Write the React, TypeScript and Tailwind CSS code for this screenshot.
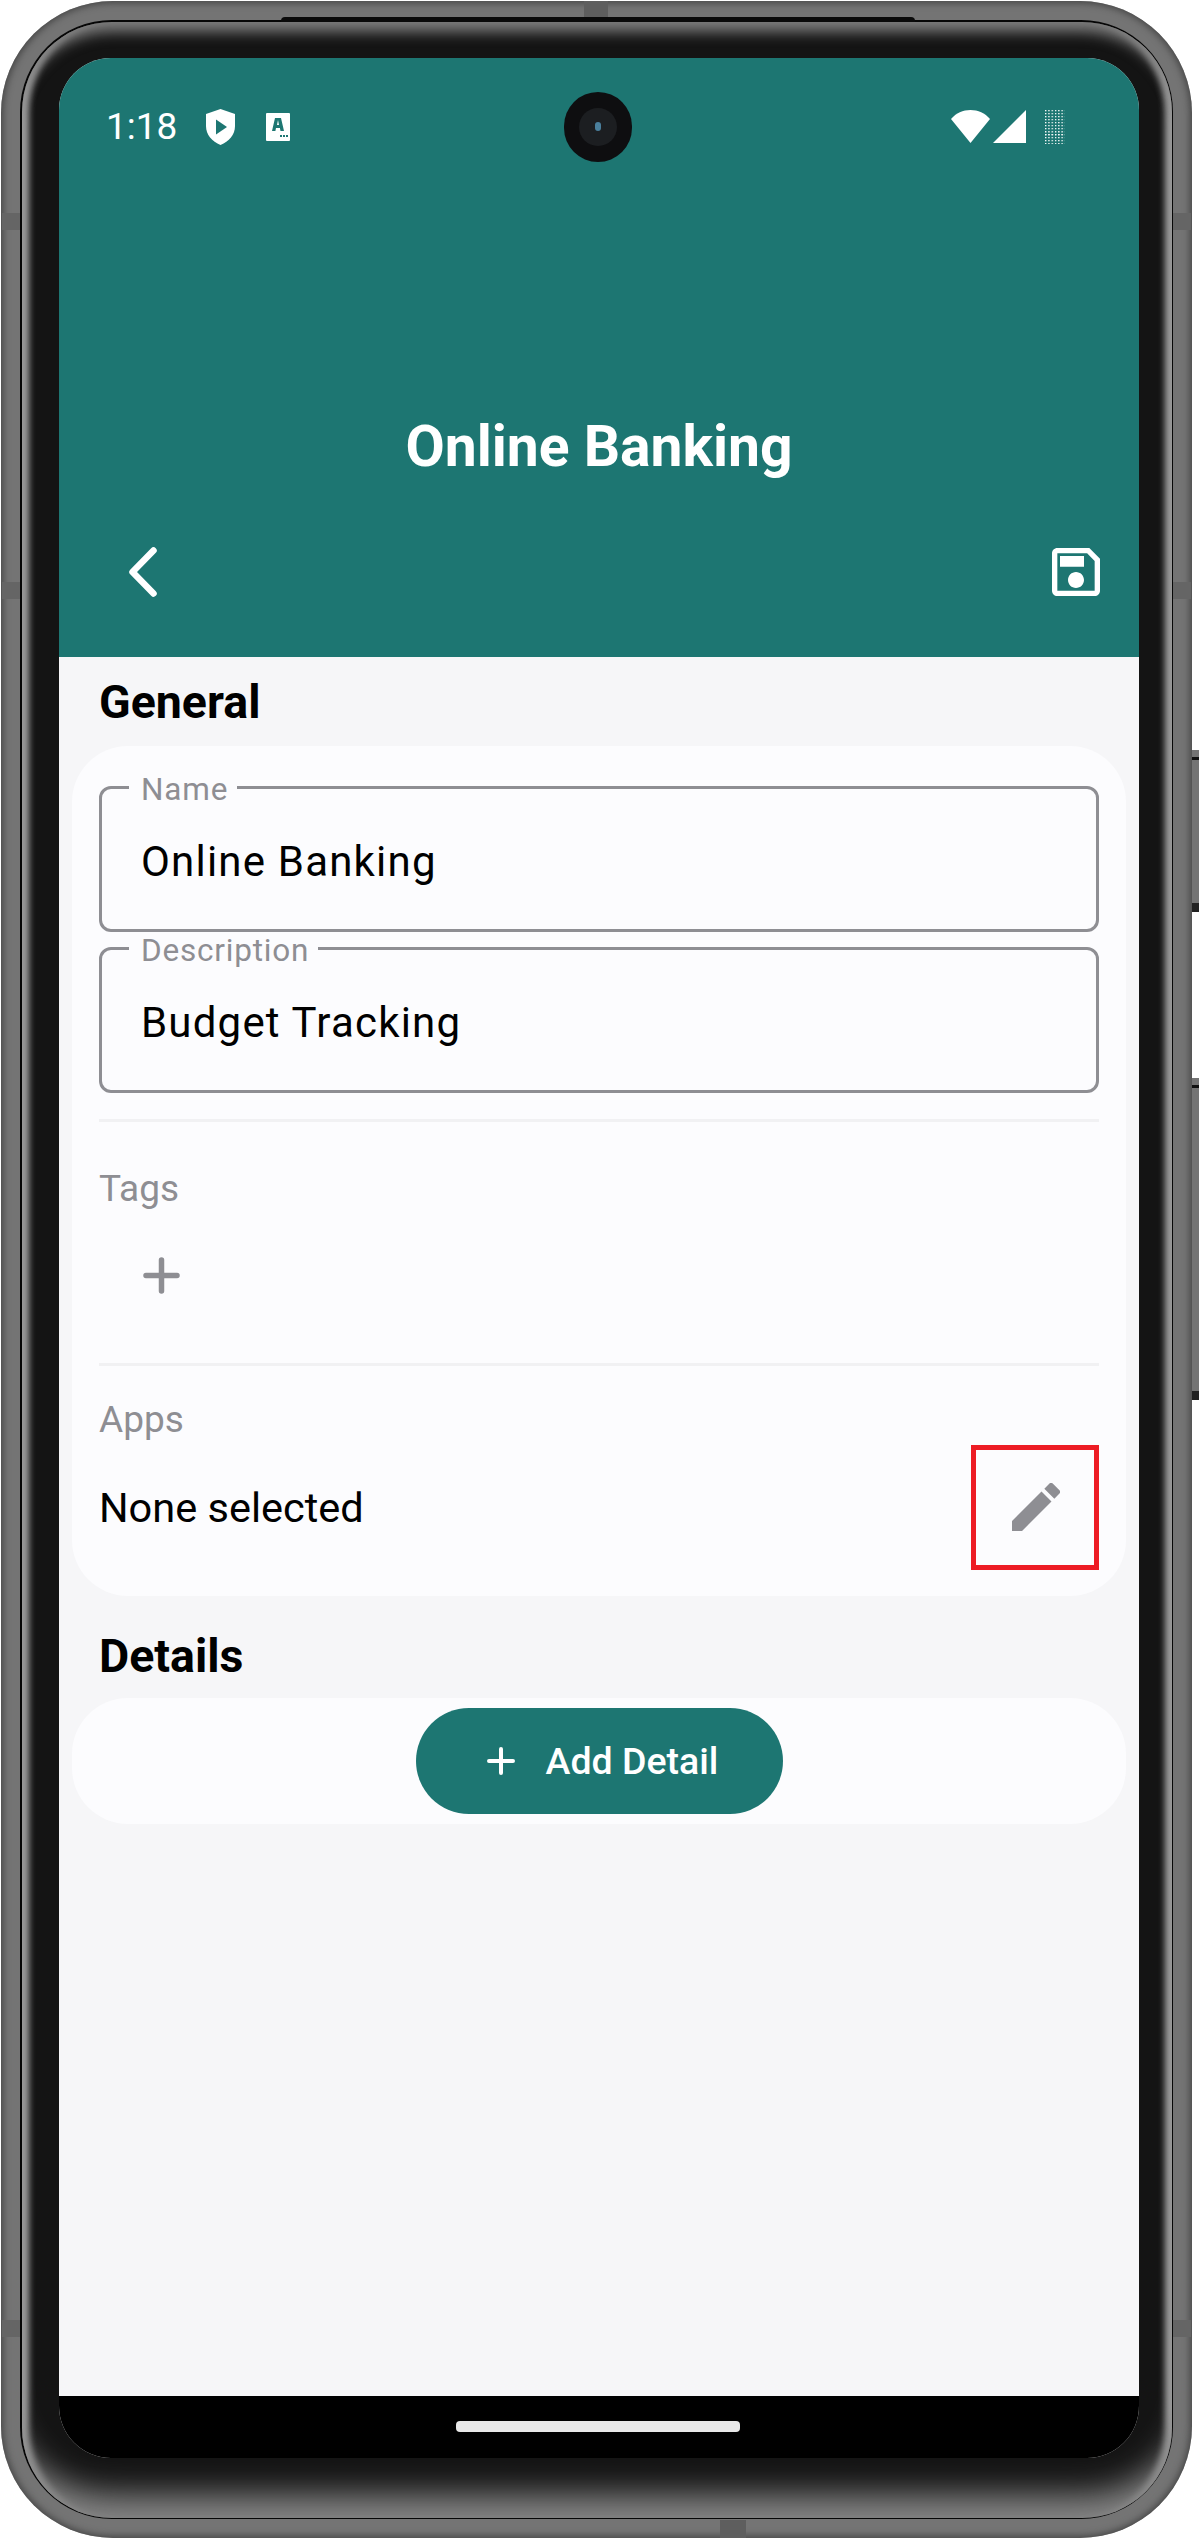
const TEAL = "bg-[#1d7672]";

const notches = [213, 582, 2320];

const StatusBar = () => (
  <div className="grid grid-cols-3 items-center h-[70px] mt-[34px] px-[47px] text-white">
    <div className="flex items-center">
      <span className="text-[37px] leading-none w-[101px]">1:18</span>
      <svg viewBox="0 0 29 36" className="w-[29px] h-[36px] ml-[-1px]">
        <path d="M14.500 0L29 5v12c0 9-6 15.500-14.500 19C6 32.500 0 26 0 17V5z" fill="#fff" />
        <path d="M10 10.500L21 18l-11 7.500z" fill="#1d7672" />
      </svg>
      <svg viewBox="0 0 24 28" className="w-[24px] h-[28px] ml-[31px]">
        <path d="M1 0h22a1 1 0 011 1v26a1 1 0 01-1 1H1a1 1 0 01-1-1V1a1 1 0 011-1z" fill="#fff" />
        <path d="M9 5h6l3 13h-3.500l-.6-3H10l-.6 3H6zM11 12h2l-1-5zM14 22h2v2h-2zM17 22h2v2h-2zM20 22h2v2h-2z" fill="#1d7672" />
      </svg>
    </div>
    <div className="flex justify-center">
      <div className="flex items-center justify-center w-[68px] h-[70px] rounded-full bg-[#0e0e10] ml-[-2px]">
        <div className="flex items-center justify-center w-[38px] h-[38px] rounded-full bg-[#1c1e21]">
          <div className="w-[6px] h-[9px] rounded-full bg-[#4a7f9c]" />
        </div>
      </div>
    </div>
    <div className="flex items-center justify-end pr-[27px]">
      <svg viewBox="0 0 39 33" className="w-[39px] h-[33px]">
        <path d="M0 9C5 3 12 0 19.500 0S34 3 39 9L19.500 33z" fill="#fff" />
      </svg>
      <svg viewBox="0 0 33 33" className="w-[33px] h-[33px] ml-[3px]">
        <path d="M33 0v33H0z" fill="#fff" />
      </svg>
      <svg viewBox="0 0 20 34" className="w-[20px] h-[34px] ml-[19px]">
        <defs>
          <pattern id="dots" width="3.300" height="3" patternUnits="userSpaceOnUse">
            <rect width="1.300" height="1.300" fill="#fff" />
          </pattern>
        </defs>
        <rect width="20" height="34" fill="url(#dots)" />
        <rect y="22" width="20" height="5" fill="url(#dots)" />
      </svg>
    </div>
  </div>
);

const Field = ({ label, value }: { label: string; value: string }) => (
  <div className="relative h-[146px] rounded-[12px] border-[3px] border-[#8e8e93]">
    <span className="absolute left-[27px] top-[-18px] bg-[#fcfcfe] pl-[12px] pr-[9px] text-[31.500px] leading-[38px] tracking-[0.8px] text-[#8e8e93]">
      {label}
    </span>
    <div className="pl-[39px] pt-[48px] text-[42px] leading-[50px] tracking-[1.200px] text-black">{value}</div>
  </div>
);

const SectionTitle = ({ children }: { children: string }) => (
  <h2 className="px-[40px] text-[46.500px] leading-[56px] font-bold text-black">{children}</h2>
);

const SmallLabel = ({ children }: { children: string }) => (
  <div className="text-[37px] leading-[44px] text-[#8e8e93]">{children}</div>
);

export default function App() {
  return (
    <div className="relative w-[1200px] h-[2541px] bg-white pl-[1px] pt-[1px] font-['Roboto',sans-serif] overflow-hidden">
      {/* side buttons */}
      <div className="absolute left-[1191px] top-[750px] flex flex-col justify-between w-[8px] h-[162px] bg-[#747474] pt-[7px]">
        <div className="h-[3px] bg-[#111]" />
        <div className="h-[9px] bg-[#222]" />
      </div>
      <div className="absolute left-[1191px] top-[1078px] flex flex-col justify-between w-[8px] h-[322px] bg-[#747474] pt-[7px]">
        <div className="h-[3px] bg-[#111]" />
        <div className="h-[9px] bg-[#222]" />
      </div>

      {/* phone body */}
      <div className="relative w-[1191px] h-[2537px] rounded-[112px] bg-[#747474] p-[19px] shadow-[inset_0_0_7px_2px_#454545]">
        {/* antenna bands */}
        <div className="absolute left-[583px] top-0 w-[24px] h-[16px] bg-[#5e5e5e]" />
        <div className="absolute left-[719px] bottom-0 w-[26px] h-[18px] bg-[#5e5e5e]" />
        {notches.map((y) => (
          <div key={y} className="contents">
            <div className="absolute left-[1px] w-[18px] h-[17px] bg-[#656565]" style={{ top: y - 1 }} />
            <div className="absolute right-[1px] w-[18px] h-[17px] bg-[#656565]" style={{ top: y - 1 }} />
          </div>
        ))}
        <div className="absolute left-[280px] top-[16px] w-[634px] h-[5px] rounded-t-[4px] bg-[#0a0a0a]" />
        <div className="h-full rounded-[92px] bg-[#060606] p-[1.500px]">
          <div className="h-full rounded-[90px] bg-[#141414] pl-[37.500px] pr-[31.500px] pt-[36px] shadow-[inset_0_18px_14px_-8px_#7c7c7c,inset_0_-46px_32px_-22px_#858585,inset_11px_0_6px_-4px_#a0a0a0,inset_-11px_0_6px_-4px_#a0a0a0]">
            {/* screen */}
            <div className="flex flex-col w-[1080px] h-[2400px] rounded-t-[52px] rounded-b-[52px] overflow-hidden bg-[#f6f6f8]">
              <header className={`flex flex-col h-[599px] ${TEAL}`}>
                <StatusBar />
                <h1 className="mt-[252px] text-center text-[57px] leading-[66px] font-bold text-white">Online Banking</h1>
                <div className="flex items-center justify-between mt-[67px] px-[39px]">
                  <svg viewBox="0 0 28 50" className="w-[28px] h-[50px] ml-[31px]" fill="none" stroke="#fff" strokeWidth="6.500" strokeLinecap="round" strokeLinejoin="round">
                    <path d="M24.500 3.500L3.500 25l21 21.500" />
                  </svg>
                  <svg viewBox="3 3 18 18" className="w-[48px] h-[48px]" fill="#fff">
                    <path d="M17 3H5c-1.110 0-2 .9-2 2v14c0 1.100.89 2 2 2h14c1.100 0 2-.9 2-2V7l-4-4zm2 16H5V5h11.170L19 7.830V19zm-7-7c-1.660 0-3 1.340-3 3s1.340 3 3 3 3-1.340 3-3-1.340-3-3-3zM6 6h9v4H6z" />
                  </svg>
                </div>
              </header>

              <main className="flex flex-col pt-[17px]">
                <SectionTitle>General</SectionTitle>
                <section className="mt-[16px] mx-[13px] h-[850px] rounded-[56px] bg-[#fcfcfe] px-[27px] pt-[40px]">
                  <Field label="Name" value="Online Banking" />
                  <div className="mt-[15px]">
                    <Field label="Description" value="Budget Tracking" />
                  </div>
                  <div className="mt-[26px] h-[3px] bg-[#f1f1f3]" />
                  <div className="mt-[45px]">
                    <SmallLabel>Tags</SmallLabel>
                  </div>
                  <svg viewBox="0 0 37 37" className="w-[37px] h-[37px] ml-[44px] mt-[46px]" stroke="#8e8e93" strokeWidth="5.500" strokeLinecap="round">
                    <path d="M18.500 3v31M3 18.500h31" />
                  </svg>
                  <div className="mt-[69px] h-[3px] bg-[#f1f1f3]" />
                  <div className="mt-[32px]">
                    <SmallLabel>Apps</SmallLabel>
                  </div>
                  <div className="flex items-center justify-between mt-[3px]">
                    <span className="text-[41.500px] leading-[48px] text-black mt-[2px]">None selected</span>
                    <div className="flex items-center justify-center w-[128px] h-[125px] border-[5px] border-[#ed1c24]">
                      <svg viewBox="3 3 18 18" className="w-[48px] h-[48px] ml-[2px]" fill="#8e8e93">
                        <path d="M3 17.250V21h3.750L17.810 9.940l-3.750-3.750L3 17.250zM20.710 7.040a.996.996 0 000-1.410l-2.340-2.340a.996.996 0 00-1.410 0l-1.830 1.830 3.750 3.750 1.830-1.830z" />
                      </svg>
                    </div>
                  </div>
                </section>

                <div className="mt-[32px]">
                  <SectionTitle>Details</SectionTitle>
                </div>
                <section className="flex justify-center items-center mt-[14px] mx-[13px] h-[126px] rounded-[56px] bg-[#fcfcfe]">
                  <button className={`flex items-center justify-center w-[367px] h-[106px] rounded-full pl-[7px] ${TEAL} text-white`}>
                    <svg viewBox="0 0 28 28" className="w-[28px] h-[28px]" stroke="#fff" strokeWidth="4" strokeLinecap="round">
                      <path d="M14 2v24M2 14h24" />
                    </svg>
                    <span className="ml-[31px] text-[37.500px] leading-[44px] font-medium">Add Detail</span>
                  </button>
                </section>
              </main>

              {/* nav bar */}
              <div className="flex justify-center mt-auto h-[62px] bg-black pt-[25px]">
                <div className="w-[284px] h-[11px] rounded-[4px] bg-[#e8e8e8] ml-[-3px]" />
              </div>
            </div>
          </div>
        </div>
      </div>
    </div>
  );
}
